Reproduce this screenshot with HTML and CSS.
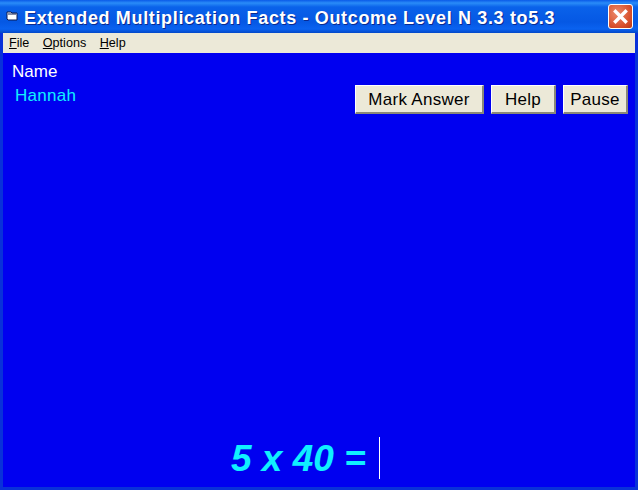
FILE: index.html
```html
<!DOCTYPE html>
<html lang="en">
<head>
<meta charset="utf-8">
<title>Extended Multiplication Facts</title>
<link rel="stylesheet" href="styles.css">
</head>
<body>
<div class="window">
  <header class="titlebar">
    <svg class="app-icon" viewBox="0 0 12 10" width="12" height="10"><path d="M1 1h4l1 1h5v7H2L1 8z" fill="#fff" stroke="#0a1a50"/><path d="M2 3h8" stroke="#0a1a50"/></svg>
    <span class="title">Extended Multiplication Facts - Outcome Level N 3.3 to5.3</span>
    <button class="close" aria-label="Close">
      <svg viewBox="0 0 23 23" width="23" height="23"><path d="M6.500 6.500l10 10M16.500 6.500l-10 10" stroke="#fff" stroke-width="3.400" stroke-linecap="square"/></svg>
    </button>
  </header>
  <nav class="menubar">
    <span class="menu-item"><u>F</u>ile</span>
    <span class="menu-item"><u>O</u>ptions</span>
    <span class="menu-item"><u>H</u>elp</span>
  </nav>
  <main class="client">
    <div class="top">
      <div class="student">
        <div class="name-label">Name</div>
        <div class="name-value">Hannah</div>
      </div>
      <div class="actions">
        <button class="btn btn-mark">Mark Answer</button>
        <button class="btn btn-small">Help</button>
        <button class="btn btn-small">Pause</button>
      </div>
    </div>
    <div class="question">
      <span class="equation">5 x 40 =</span>
      <span class="answer"></span>
    </div>
  </main>
</div>
</body>
</html>
```
FILE: styles.css
```css
* { box-sizing: border-box; }
html, body { margin: 0; padding: 0; }
body { width: 638px; height: 490px; overflow: hidden; background: #0a50e0; }
.window {
  width: 638px; height: 490px; display: flex; flex-direction: column;
  background: #0831d9;
}
.titlebar {
  height: 33px; flex: none; display: flex; align-items: center;
  padding: 2px 5px 0 6px;
  background: linear-gradient(180deg, #0a5ae8 0, #2a8cf8 3px, #0a62ea 7px, #0558e4 22px, #0a62f0 29px, #0348c8 33px);
}
.app-icon { flex: none; margin-right: 6px; margin-top: -3px; }
.title {
  flex: 1; color: #fff; font: bold 18px/1 "Liberation Sans", sans-serif;
  letter-spacing: 0.650px; white-space: nowrap; text-shadow: 1px 1px 0 #0a2a90;
}
.close {
  flex: none; width: 25px; height: 25px; padding: 0; margin: -2px 0 0 0;
  border: 1px solid #fff; border-radius: 3px;
  background: radial-gradient(circle at 35% 35%, #ec8a6c, #d8502c 65%, #b83818);
  display: flex; align-items: center; justify-content: center;
}
.menubar {
  height: 20px; flex: none; display: flex; align-items: center; gap: 13.500px;
  margin: 0 3px; padding: 0 6px; background: #ece9d8;
  font: 12.600px/1 "Liberation Sans", sans-serif; color: #000;
}
.client {
  flex: 1; min-height: 0; display: flex; flex-direction: column;
  margin: 0 3px 3px; background: #0000f0;
}
.top { display: flex; padding: 10px 7px 0 9px; }
.student { font: 17px/1 "Liberation Sans", sans-serif; letter-spacing: 0.300px; }
.name-label { color: #fff; letter-spacing: 0; }
.name-value { color: #10f0ff; margin: 7px 0 0 3px; }
.actions { margin-left: auto; margin-top: 22px; display: flex; gap: 7px; }
.btn {
  height: 29px; padding: 0; background: #ece9d8; color: #000;
  border: 0; border-right: 2px solid #8a8878; border-bottom: 2px solid #8a8878;
  border-top: 1px solid #fff; border-left: 1px solid #fff;
  font: 17px/1 "Liberation Sans", sans-serif; letter-spacing: 0.300px;
}
.btn-mark { width: 129px; }
.btn-small { width: 65px; }
.question {
  margin-top: auto; margin-bottom: 8px; display: flex; align-items: center;
  padding-left: 228px;
}
.equation {
  color: #10f0ff; font: italic bold 37px/1 "Liberation Sans", sans-serif;
  white-space: pre;
}
.answer { width: 1px; height: 42px; background: #fff; margin-left: 13px; }
```
